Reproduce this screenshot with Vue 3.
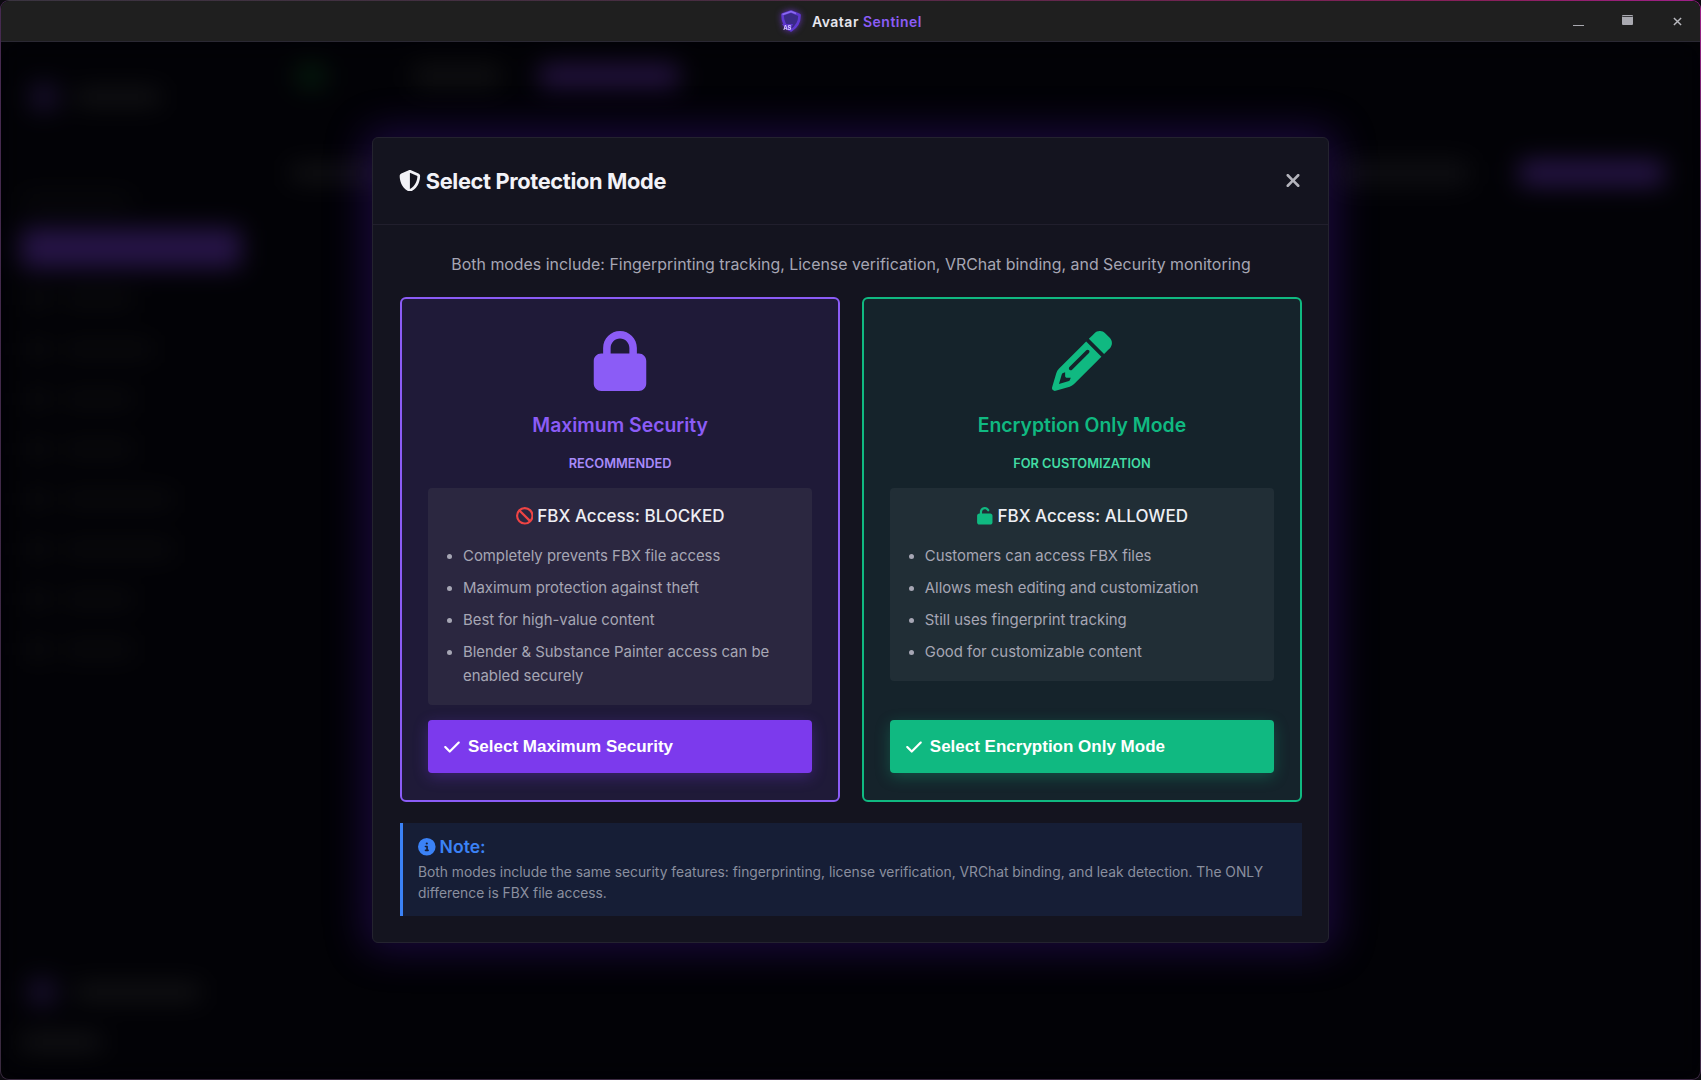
<script setup>
const modes = [
  {
    id: 'max',
    title: 'Maximum Security',
    tag: 'RECOMMENDED',
    access: 'FBX Access: BLOCKED',
    button: 'Select Maximum Security',
    features: [
      'Completely prevents FBX file access',
      'Maximum protection against theft',
      'Best for high-value content',
      'Blender & Substance Painter access can be enabled securely'
    ]
  },
  {
    id: 'enc',
    title: 'Encryption Only Mode',
    tag: 'FOR CUSTOMIZATION',
    access: 'FBX Access: ALLOWED',
    button: 'Select Encryption Only Mode',
    features: [
      'Customers can access FBX files',
      'Allows mesh editing and customization',
      'Still uses fingerprint tracking',
      'Good for customizable content'
    ]
  }
]

const sideRows = [70, 90, 70, 70, 110, 110, 70, 70]
</script>

<template>
  <div class="frame">
    <div class="window">
      <header class="titlebar">
        <div class="brand">
          <svg class="brand-logo" viewBox="0 0 24 26">
            <path class="shield-line" d="M13 3.5 21.5 7c.2 6-1.5 11-8.5 15.5C7 19 4.5 13 4.5 6.5z" />
            <path class="shield-hi" d="M4.5 6.5 13 3.5 18 5.5" />
            <path fill="#5b34c9" d="M4 16h11l-3 7-4-1.5z" />
            <text x="5.2" y="22" class="brand-as">AS</text>
          </svg>
          <span class="brand-name">Avatar <em>Sentinel</em></span>
        </div>
        <div class="controls">
          <span class="ctl-min"></span>
          <span class="ctl-max"></span>
          <svg class="ctl-close" viewBox="0 0 10 10"><path d="M1 1l8 8M9 1l-8 8" /></svg>
        </div>
      </header>

      <div class="stage">
        <!-- app behind the dialog, blurred out -->
        <div class="behind" aria-hidden="true">
          <aside class="behind-side">
            <div class="behind-logo"><i class="dot"></i><i class="bar" style="width: 85px"></i></div>
            <i class="bar side-label"></i>
            <div class="side-active"></div>
            <div class="side-list">
              <div v-for="(w, i) in sideRows" :key="i" class="side-row">
                <i class="sq"></i><i class="bar" :style="{ width: w + 'px' }"></i>
              </div>
            </div>
            <div class="side-foot">
              <div class="side-user"><i class="dot"></i><i class="bar" style="width: 125px"></i></div>
              <i class="bar" style="width: 80px"></i>
            </div>
          </aside>
          <div class="behind-main">
            <div class="behind-tabs">
              <i class="tab tab-green"></i>
              <i class="tab tab-plain"></i>
              <i class="tab tab-purple"></i>
            </div>
            <div class="behind-head">
              <i class="bar" style="width: 90px"></i>
              <span class="spacer"></span>
              <i class="head-btn"></i>
              <i class="head-btn head-purple"></i>
            </div>
          </div>
        </div>

        <div class="overlay">
          <section class="modal">
            <div class="modal-head">
              <h2>
                <svg class="ico" viewBox="0 0 512 512"><path d="M256 0c4.6 0 9.2 1 13.4 2.9L457.7 82.8c22 9.3 38.4 31 38.3 57.2c-.5 99.2-41.3 280.7-213.6 363.2c-16.7 8-36.1 8-52.8 0C57.3 420.7 16.5 239.2 16 140c-.1-26.2 16.3-47.9 38.3-57.2L242.7 2.9C246.8 1 251.4 0 256 0zm0 66.8V444.8C394 378 431.1 230.1 432 141.4L256 66.8l0 0z" /></svg>
                <span>Select Protection Mode</span>
              </h2>
              <svg class="modal-x" viewBox="0 0 384 512"><path d="M342.6 150.6c12.5-12.5 12.5-32.8 0-45.3s-32.8-12.5-45.3 0L192 210.7 86.6 105.4c-12.5-12.5-32.8-12.5-45.3 0s-12.5 32.8 0 45.3L146.7 256 41.4 361.4c-12.5 12.5-12.5 32.8 0 45.3s32.8 12.5 45.3 0L192 301.3 297.4 406.6c12.5 12.5 32.8 12.5 45.3 0s12.5-32.8 0-45.3L237.3 256 342.6 150.6z" /></svg>
            </div>

            <div class="modal-body">
              <p class="intro">Both modes include: Fingerprinting tracking, License verification, VRChat binding, and Security monitoring</p>

              <div class="cards">
                <article v-for="m in modes" :key="m.id" class="card" :class="m.id">
                  <svg v-if="m.id === 'max'" class="card-icon" viewBox="0 0 448 512"><path d="M144 144v48H304V144c0-44.2-35.8-80-80-80s-80 35.8-80 80zM80 192V144C80 64.5 144.5 0 224 0s144 64.5 144 144v48h16c35.3 0 64 28.7 64 64V448c0 35.3-28.7 64-64 64H64c-35.3 0-64-28.7-64-64V256c0-35.3 28.7-64 64-64H80z" /></svg>
                  <svg v-else class="card-icon" viewBox="0 0 512 512"><path d="M410.3 231l11.3-11.3-33.9-33.9-62.1-62.1L291.7 89.8l-11.3 11.3-22.6 22.6L58.6 322.9c-10.4 10.4-18 23.3-22.2 37.4L1 480.7c-2.5 8.4-.2 17.5 6.1 23.7s15.3 8.5 23.7 6.1l120.3-35.4c14.1-4.2 27-11.8 37.4-22.2L387.7 253.7 410.3 231zM160 399.4l-9.1 22.7c-4 3.1-8.5 5.4-13.3 6.9L59.4 452l23-78.1c1.4-4.9 3.8-9.4 6.9-13.3l22.7-9.1v32c0 8.8 7.2 16 16 16h32zM362.7 18.7L348.3 33.2 325.7 55.8 314.3 67.1l33.9 33.9 62.1 62.1 33.9 33.9 11.3-11.3 22.6-22.6 14.5-14.5c25-25 25-65.5 0-90.5L453.3 18.7c-25-25-65.5-25-90.5 0zm-47.4 168l-144 144c-6.2 6.2-16.4 6.2-22.6 0s-6.2-16.4 0-22.6l144-144c6.2-6.2 16.4-6.2 22.6 0s6.2 16.4 0 22.6z" /></svg>

                  <h3>{{ m.title }}</h3>
                  <div class="tag">{{ m.tag }}</div>

                  <div class="box">
                    <div class="access">
                      <svg v-if="m.id === 'max'" class="ico ban" viewBox="0 0 512 512"><path d="M367.2 412.5L99.5 144.8C77.1 176.1 64 214.5 64 256c0 106 86 192 192 192c41.5 0 79.9-13.1 111.2-35.5zm45.3-45.3C434.9 335.9 448 297.5 448 256c0-106-86-192-192-192c-41.5 0-79.9 13.1-111.2 35.5L412.5 367.2zM0 256a256 256 0 1 1 512 0A256 256 0 1 1 0 256z" /></svg>
                      <svg v-else class="ico open" viewBox="0 0 448 512"><path d="M144 144c0-44.2 35.8-80 80-80c31.9 0 59.4 18.6 72.3 45.7c7.6 16 26.7 22.8 42.6 15.2s22.8-26.7 15.2-42.6C331 33.7 281.5 0 224 0C144.5 0 80 64.5 80 144v48H64c-35.3 0-64 28.7-64 64V448c0 35.3 28.7 64 64 64H384c35.3 0 64-28.7 64-64V256c0-35.3-28.7-64-64-64H144V144z" /></svg>
                      <span>{{ m.access }}</span>
                    </div>
                    <ul>
                      <li v-for="f in m.features" :key="f">{{ f }}</li>
                    </ul>
                  </div>

                  <button class="pick">
                    <svg class="check" viewBox="0 0 448 512"><path d="M438.6 105.4c12.5 12.5 12.5 32.8 0 45.3l-256 256c-12.5 12.5-32.8 12.5-45.3 0l-128-128c-12.5-12.5-12.5-32.8 0-45.3s32.8-12.5 45.3 0L160 338.7 393.4 105.4c12.5-12.5 32.8-12.5 45.3 0z" /></svg>
                    {{ m.button }}
                  </button>
                </article>
              </div>

              <div class="note">
                <div class="note-title">
                  <svg class="ico" viewBox="0 0 512 512"><path d="M256 512A256 256 0 1 0 256 0a256 256 0 1 0 0 512zM216 336h24V272H216c-13.3 0-24-10.7-24-24s10.7-24 24-24h48c13.3 0 24 10.7 24 24v88h8c13.3 0 24 10.7 24 24s-10.7 24-24 24H216c-13.3 0-24-10.7-24-24s10.7-24 24-24zm40-208a32 32 0 1 1 0 64 32 32 0 1 1 0-64z" /></svg>
                  <span>Note:</span>
                </div>
                <p>Both modes include the same security features: fingerprinting, license verification, VRChat binding, and leak detection. The ONLY difference is FBX file access.</p>
              </div>
            </div>
          </section>
        </div>
      </div>
    </div>
  </div>
</template>

<style>
html, body {
  margin: 0;
  background: #0c0a10;
}
</style>

<style scoped>
.frame {
  width: 1701px;
  height: 1080px;
  box-sizing: border-box;
  padding: 1px;
  border-radius: 9px;
  background:
    linear-gradient(90deg, #3a3440 0%, #4a2c42 45%, #8a1f5c 88%, #a0208a 100%) top / 100% 1px no-repeat,
    linear-gradient(195deg, #a0208a 0, #4a2a55 14%, #3a2a40 100%);
  overflow: hidden;
  font-family: Inter, "Liberation Sans", sans-serif;
}

.window {
  height: 100%;
  border-radius: 8px;
  overflow: hidden;
  display: flex;
  flex-direction: column;
  background: #020206;
}

.titlebar {
  height: 41px;
  flex: none;
  position: relative;
  z-index: 3;
  box-sizing: border-box;
  display: flex;
  align-items: center;
  justify-content: center;
  background: #1f1f1f;
  border-bottom: 1px solid #2a2833;
}

.brand {
  display: flex;
  align-items: center;
  gap: 10px;
  margin-left: -1px;
}

.brand-logo {
  width: 24px;
  height: 26px;
  filter: drop-shadow(0 0 3px rgba(124, 58, 237, 0.7));
}

.shield-line {
  fill: #3a2a86;
  stroke: #5f38d0;
  stroke-width: 2.6;
  stroke-linejoin: round;
}

.shield-hi {
  fill: none;
  stroke: #8b6cf0;
  stroke-width: 1.4;
}

.brand-as {
  font-size: 6px;
  font-weight: 700;
  fill: #d6c9ff;
}

.brand-name {
  font-size: 14px;
  font-weight: 600;
  letter-spacing: 0.5px;
  color: #e6e6ee;
}

.brand-name em {
  font-style: normal;
  color: #8b5cf6;
}

.controls {
  position: absolute;
  right: 18px;
  top: 0;
  bottom: 0;
  display: flex;
  align-items: center;
}

.ctl-min {
  width: 11px;
  height: 1px;
  margin: 8px 38px 0 0;
  background: #a9a9b0;
}

.ctl-max {
  width: 11px;
  height: 8px;
  margin: -1px 40px 0 0;
  border-radius: 1px;
  background: #a9a9b0;
  border-top: 1px solid #3a3a3e;
  box-shadow: 0 -1px 0 #a9a9b0;
}

.ctl-close {
  width: 9px;
  height: 9px;
  fill: none;
  stroke: #b8b8be;
  stroke-width: 1.6;
}

.stage {
  flex: 1;
  position: relative;
}

/* blurred app */
.behind {
  position: absolute;
  inset: 0;
  display: flex;
  filter: blur(12px);
  background: #020206;
}

.behind i {
  display: block;
}

.behind-side {
  width: 260px;
  box-sizing: border-box;
  padding: 42px 20px 30px;
  display: flex;
  flex-direction: column;
}

.bar {
  height: 14px;
  border-radius: 3px;
  background: #161618;
}

.dot {
  width: 26px;
  height: 26px;
  border-radius: 6px;
  background: #1a1030;
}

.sq {
  width: 18px;
  height: 18px;
  background: #0e0e10;
}

.behind-logo {
  display: flex;
  align-items: center;
  gap: 18px;
  padding-left: 10px;
}

.side-label {
  width: 110px;
  height: 10px;
  margin-top: 86px;
  background: #0c0c0e;
}

.side-active {
  width: 220px;
  height: 40px;
  margin-top: 22px;
  border-radius: 6px;
  background: #261446;
}

.side-list {
  display: flex;
  flex-direction: column;
  gap: 32px;
  margin-top: 22px;
}

.side-row {
  display: flex;
  align-items: center;
  gap: 16px;
  padding-left: 8px;
}

.side-row .bar {
  background: #0c0c0e;
}

.side-foot {
  margin-top: auto;
  display: flex;
  flex-direction: column;
  gap: 30px;
}

.side-user {
  display: flex;
  align-items: center;
  gap: 20px;
  padding-left: 8px;
}

.behind-main {
  flex: 1;
  padding: 22px 36px 0 30px;
}

.behind-tabs {
  display: flex;
}

.tab {
  height: 24px;
  border-radius: 6px;
}

.tab-green { width: 30px; margin-left: 5px; background: #051a0c; }
.tab-plain { width: 88px; margin-left: 87px; background: #0f0f11; }
.tab-purple { width: 140px; margin-left: 38px; background: #241240; }

.behind-head {
  display: flex;
  align-items: center;
  gap: 50px;
  margin-top: 72px;
}

.spacer {
  flex: 1;
}

.head-btn {
  width: 130px;
  height: 26px;
  border-radius: 6px;
  background: #0e0e12;
}

.head-purple {
  width: 145px;
  background: #261446;
}

/* dialog */
.overlay {
  position: absolute;
  top: 95px;
  left: 0;
  right: 0;
  display: flex;
  justify-content: center;
}

.modal {
  width: 957px;
  box-sizing: border-box;
  background: #14141f;
  border: 1px solid #24232f;
  border-radius: 6px;
  box-shadow: 0 0 40px 8px rgba(90, 30, 200, 0.28);
}

.modal-head {
  height: 87px;
  box-sizing: border-box;
  padding: 0 27px;
  display: flex;
  align-items: center;
  justify-content: space-between;
  border-bottom: 1px solid #211f2d;
}

.modal-head h2 {
  margin: -1px 0 0 -1px;
  display: flex;
  align-items: center;
  gap: 5px;
  font-size: 21.8px;
  font-weight: 700;
  letter-spacing: -0.35px;
  color: #f2f2f7;
}

.ico {
  width: 1em;
  height: 1em;
  flex: none;
  fill: currentColor;
}

.modal-x {
  width: 16px;
  height: 21px;
  margin-top: -2px;
  fill: #b4b4bc;
}

.modal-body {
  padding: 0 26px 26px 27px;
}

.intro {
  margin: 0;
  padding-top: 28px;
  height: 44px;
  font-size: 15.92px;
  line-height: 24px;
  text-align: center;
  color: #a6a6b4;
}

.cards {
  display: grid;
  grid-template-columns: 1fr 1fr;
  gap: 21.6px;
}

.card {
  box-sizing: border-box;
  height: 505px;
  padding: 32px 26px 27px;
  border-radius: 6px;
  border: 2px solid;
  display: flex;
  flex-direction: column;
  align-items: stretch;
  text-align: center;
}

.card.max {
  border-color: #8b5cf6;
  background: #1f1a38;
}

.card.enc {
  border-color: #10b981;
  background: #15232b;
}

.card-icon {
  width: 60px;
  height: 60px;
  align-self: center;
}

.max .card-icon { fill: #8b5cf6; }
.enc .card-icon { fill: #10b981; }

.card h3 {
  margin: 19px 0 0;
  font-size: 19.4px;
  line-height: 30px;
  font-weight: 600;
}

.max h3 { color: #8b5cf6; }
.enc h3 { color: #10b981; }

.tag {
  margin-top: 15px;
  font-size: 12.8px;
  line-height: 18px;
  font-weight: 600;
}

.max .tag { color: #a78bfa; }
.enc .tag { color: #42dba3; }

.box {
  margin-top: 15px;
  padding: 17px 16px 17px;
  border-radius: 4px;
}

.max .box { background: #2b2740; }
.enc .box { background: #212e36; }

.access {
  display: flex;
  align-items: center;
  justify-content: center;
  gap: 4px;
  font-size: 17px;
  line-height: 22px;
  font-weight: 500;
  color: #eeeef3;
}

.access .ico {
  width: 17.6px;
  height: 17.6px;
}

.ban { color: #ef4444; }
.open { color: #10b981; }

.box ul {
  margin: 17px 0 0;
  padding-left: 19px;
  text-align: left;
  color: #a6a6b4;
  font-size: 14.9px;
  line-height: 24px;
}

.box li + li {
  margin-top: 8px;
}

.pick {
  margin-top: auto;
  height: 53px;
  flex: none;
  padding: 0 16px;
  border: 0;
  border-radius: 4px;
  display: flex;
  align-items: center;
  gap: 8px;
  font-family: "Liberation Sans", Arial, sans-serif;
  font-size: 17px;
  font-weight: 700;
  color: #fff;
}

.max .pick {
  background: #7c3aed;
  box-shadow: 0 4px 15px rgba(124, 58, 237, 0.3);
}

.enc .pick {
  background: #10b981;
  box-shadow: 0 4px 15px rgba(16, 185, 129, 0.3);
}

.check {
  width: 16px;
  height: 18px;
  fill: #fff;
}

.note {
  margin-top: 21px;
  height: 93px;
  box-sizing: border-box;
  padding: 13px 15px 12px;
  border-left: 3px solid #3b82f6;
  background: #161e36;
}

.note-title {
  display: flex;
  align-items: center;
  gap: 4px;
  font-size: 17.6px;
  line-height: 22px;
  font-weight: 600;
  color: #3b82f6;
}

.note p {
  margin: 4px 0 0;
  font-size: 13.8px;
  line-height: 20.5px;
  color: #8a8f9f;
}
</style>
